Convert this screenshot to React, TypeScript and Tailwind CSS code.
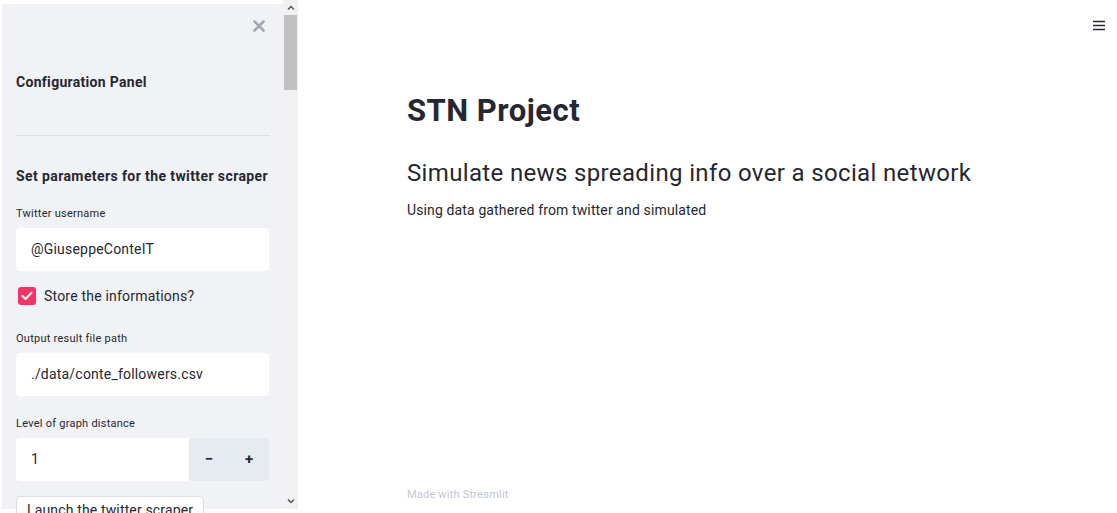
import React from "react";

const font = { fontFamily: "Roboto, 'Noto Sans', sans-serif" };

const Label = ({ children, top }: { children: React.ReactNode; top: string }) => (
  <div className={`${top} mb-[7px] text-[11px] leading-[14px] tracking-[0.25px] text-[#262730]`}>{children}</div>
);

const TextBox = ({ value }: { value: string }) => (
  <div className="h-[43px] bg-white rounded-[4px] flex items-center pl-[15px] text-[14px] tracking-[0.2px] text-[#262730]">
    {value}
  </div>
);

export default function App() {
  return (
    <div className="w-[1117px] h-[513px] bg-white flex overflow-hidden text-[#262730]" style={font}>
      {/* sidebar */}
      <div className="flex h-[509px]">
        <div className="w-[281px] ml-[2px] mt-[4px] bg-[#f0f2f6] px-[14px] relative">
          <div className="absolute right-[18px] top-[16px] text-[#a3a8b4]">
            <svg width="12" height="12" viewBox="0 0 12 12">
              <path d="M1.5 1.5L10.5 10.5M10.5 1.5L1.5 10.5" stroke="currentColor" strokeWidth="2.6" strokeLinecap="round" />
            </svg>
          </div>
          <div className="pt-[68px] text-[14px] leading-[20px] font-bold tracking-[0.3px]">Configuration Panel</div>
          <div className="mt-[43px] mr-[-1px] border-t border-[#dcdfe6]" />
          <div className="mt-[30px] text-[14px] leading-[20px] font-bold whitespace-nowrap tracking-[0.4px]">
            Set parameters for the twitter scraper
          </div>
          <Label top="mt-[21px]">Twitter username</Label>
          <TextBox value="@GiuseppeConteIT" />
          <div className="mt-[16px] h-[18px] flex items-center">
            <div className="ml-[2px] w-[18px] h-[18px] rounded-[3px] bg-[#f63366] flex items-center justify-center">
              <svg width="12" height="10" viewBox="0 0 12 10">
                <path d="M1.5 5L4.5 8L10.5 1.8" stroke="white" strokeWidth="2" fill="none" strokeLinecap="round" strokeLinejoin="round" />
              </svg>
            </div>
            <span className="ml-[8px] text-[14px] tracking-[0.2px]">Store the informations?</span>
          </div>
          <Label top="mt-[27px]">Output result file path</Label>
          <TextBox value="./data/conte_followers.csv" />
          <Label top="mt-[21px]">Level of graph distance</Label>
          <div className="h-[43px] flex rounded-[4px] overflow-hidden">
            <div className="flex-1 bg-white flex items-center pl-[15px] text-[14px]">1</div>
            <div className="w-[80px] bg-[#e6eaf1] flex items-center text-[15px] font-bold">
              <span className="w-[40px] text-center">−</span>
              <span className="w-[40px] text-center">+</span>
            </div>
          </div>
          <div className="mt-[15px]">
            <div className="inline-block bg-white border border-[#dcdfe6] rounded-[4px] px-[10px] pt-[3px] h-[30px] text-[14px] leading-[20px] tracking-[0.15px] whitespace-nowrap">
              Launch the twitter scraper
            </div>
          </div>
        </div>
        {/* scrollbar */}
        <div className="w-[15px] bg-[#f1f1f1] flex flex-col items-center">
          <svg className="mt-[5px]" width="8" height="6" viewBox="0 0 8 6">
            <path d="M1 4.5L4 1.5L7 4.5" stroke="#505050" strokeWidth="1.4" fill="none" />
          </svg>
          <div className="mt-[4px] w-[13px] h-[75px] bg-[#c1c1c1]" />
          <div className="flex-1" />
          <svg className="mb-[5px]" width="8" height="6" viewBox="0 0 8 6">
            <path d="M1 1.5L4 4.5L7 1.5" stroke="#505050" strokeWidth="1.4" fill="none" />
          </svg>
        </div>
      </div>
      {/* main */}
      <div className="flex-1 relative flex flex-col pl-[109px]">
        <div className="absolute right-[12px] top-[20px]">
          <svg width="12" height="11" viewBox="0 0 12 11">
            <path d="M0 1.5H12M0 5.5H12M0 9.5H12" stroke="#262730" strokeWidth="1.4" />
          </svg>
        </div>
        <h1 className="mt-[93px] text-[31px] font-bold leading-[36px] tracking-[0.5px]">STN Project</h1>
        <h2 className="mt-[29px] text-[24px] font-normal leading-[30px] tracking-[0.35px]">
          Simulate news spreading info over a social network
        </h2>
        <p className="mt-[12px] text-[14px] leading-[20px] tracking-[0.13px]">Using data gathered from twitter and simulated</p>
        <div className="flex-1" />
        <div className="mb-[10px] text-[11px] text-[#c4c7d3] tracking-[0.2px]">Made with Streamlit</div>
      </div>
    </div>
  );
}
